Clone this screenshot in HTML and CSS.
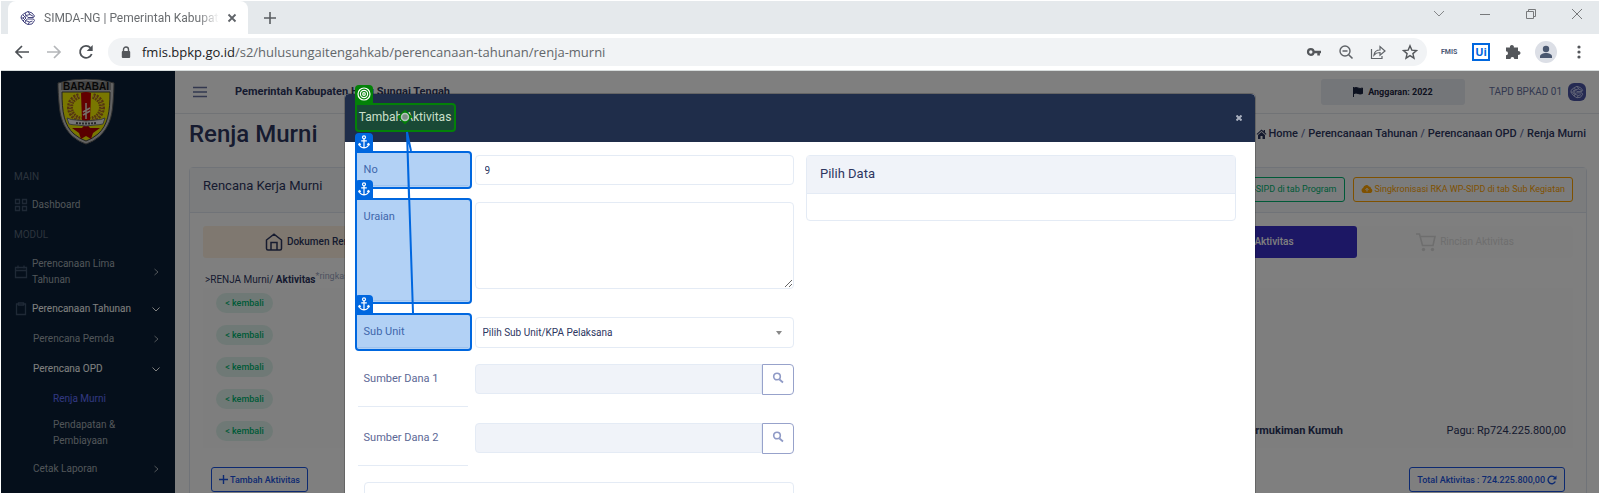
FILE: index.html
```html
<!DOCTYPE html>
<html lang="id">
<head>
<meta charset="utf-8">
<title>SIMDA-NG | Pemerintah Kabupaten</title>
<link rel="stylesheet" href="styles.css">
</head>
<body>
<svg class="defs" aria-hidden="true">
  <symbol id="anchor" viewBox="0 0 18 18"><g fill="none" stroke="#fff" stroke-width="1.2"><circle cx="9" cy="4.3" r="1.5"/><path d="M9 6v9M6.2 7.8h5.6M4.2 10.8c.3 2.6 2.2 3.9 4.8 4.1 2.600-.2 4.500-1.500 4.800-4.100M3.500 12.300l.8-1.700 1.600 1M14.500 12.300l-.8-1.700-1.600 1"/></g></symbol>
  <symbol id="right" viewBox="0 0 10 10"><path d="M3.500 2l3.500 3-3.500 3" fill="none" stroke="currentColor"/></symbol>
  <symbol id="down" viewBox="0 0 10 10"><path d="M1.500 3.500L5 7l3.500-3.500" fill="none" stroke="currentColor"/></symbol>
  <symbol id="search" viewBox="0 0 12 12"><path d="M7.500 7.500L11 10.500" stroke="currentColor" stroke-width="1.800"/><circle cx="5" cy="4.500" r="3.300" fill="none" stroke="currentColor" stroke-width="1.600"/></symbol>
  <symbol id="knot" viewBox="0 0 16 16"><g fill="none" stroke="currentColor" stroke-width="1"><path d="M5 3l3-1.500 4 1.500 2.500 3-1 1.500H8l-2-2 4-1 3.500 2M5 3L1.500 5.500 1 8l2 3 2 2M5 3l1 2.500L3 8l2.500 2.500L5 13l3 1.500 4-.5 2.500-3.500-1-1.500H7.500l-2 1.500 4 1.500 3-1M3 8H1M8 1.500l2 3M8 14.500l1.500-2.500M3 5l3 3-3 3"/></g></symbol>
</svg>

<header class="tabstrip">
  <div class="tab">
    <svg class="favicon" viewBox="0 0 16 16"><use href="#knot"/></svg>
    <span class="tab-title">SIMDA-NG | Pemerintah Kabupat</span>
    <button class="plain" aria-label="Tutup tab"><svg width="10" height="10" viewBox="0 0 10 10"><path d="M1.500 1.500l7 7M8.500 1.500l-7 7" stroke="#5f6368" stroke-width="1.800"/></svg></button>
  </div>
  <button class="plain new-tab" aria-label="Tab baru"><svg width="14" height="14" viewBox="0 0 14 14"><path d="M7 1v12M1 7h12" stroke="#5a5e62" stroke-width="1.600"/></svg></button>
  <div class="window-controls">
    <button class="plain" aria-label="Cari tab"><svg width="12" height="12" viewBox="0 0 12 12"><path d="M1 3l5 5 5-5" fill="none" stroke="#858789"/></svg></button>
    <button class="plain" aria-label="Kecilkan"><svg width="12" height="12" viewBox="0 0 12 12"><path d="M1 6.500h10" stroke="#77797b"/></svg></button>
    <button class="plain" aria-label="Pulihkan"><svg width="12" height="12" viewBox="0 0 12 12"><path d="M1.500 3.500h7v7h-7zM3.500 3.500v-2h7v7h-2" fill="none" stroke="#77797b"/></svg></button>
    <button class="plain" aria-label="Tutup"><svg width="12" height="12" viewBox="0 0 12 12"><path d="M1 1l10 10M11 1L1 11" stroke="#77797b"/></svg></button>
  </div>
</header>

<div class="toolbar">
  <nav class="history">
    <button class="plain" aria-label="Kembali"><svg width="16" height="16" viewBox="0 0 16 16"><path d="M15 8H2M8 2L2 8l6 6" fill="none" stroke="#4d5156" stroke-width="1.700"/></svg></button>
    <button class="plain" aria-label="Maju"><svg width="16" height="16" viewBox="0 0 16 16"><path d="M1 8h13M8 2l6 6-6 6" fill="none" stroke="#b4b6b9" stroke-width="1.700"/></svg></button>
    <button class="plain" aria-label="Muat ulang"><svg width="16" height="16" viewBox="0 0 16 16"><path d="M13.700 10A6 6 0 1 1 12.500 3.800" fill="none" stroke="#4d5156" stroke-width="1.800"/><path d="M14.700 1v6h-6z" fill="#4d5156"/></svg></button>
  </nav>
  <div class="omnibox">
    <svg width="10" height="13" viewBox="0 0 10 13"><path d="M2.500 6V3.500a2.500 2.500 0 0 1 5 0V6" fill="none" stroke="#54575b" stroke-width="1.400"/><rect x=".8" y="5" width="8.400" height="7" rx="1" fill="#54575b"/></svg>
    <span class="url"><b>fmis.bpkp.go.id</b>/s2/hulusungaitengahkab/perencanaan-tahunan/renja-murni</span>
    <div class="omni-icons">
      <svg viewBox="0 0 16 16"><circle cx="4.800" cy="8" r="2.800" fill="none" stroke="#54575b" stroke-width="2.200"/><path d="M8 8h7M12.600 8v3.600" stroke="#54575b" stroke-width="2.600"/></svg>
      <svg viewBox="0 0 16 16"><circle cx="7" cy="7" r="5" fill="none" stroke="#5f6368" stroke-width="1.400"/><path d="M4.500 7h5M10.700 10.700L14.500 14.500" stroke="#5f6368" stroke-width="1.600"/></svg>
      <svg viewBox="0 0 16 16"><path d="M1.500 5v9.500h10.500v-2.500M4 11c.5-3.500 2.500-5 6-5V2.500L15 7l-5 4.200V8.500C7 8.500 5.500 9.200 4 11z" fill="none" stroke="#5f6368" stroke-width="1.200"/></svg>
      <svg viewBox="0 0 16 16"><path d="M8 1.800l1.800 4.300 4.700.4-3.600 3.100 1.100 4.600L8 11.700l-4 2.500 1.100-4.600L1.500 6.500l4.700-.4z" fill="none" stroke="#54575b" stroke-width="1.400"/></svg>
    </div>
  </div>
  <div class="extensions">
    <span class="ext-fmis">FMIS</span>
    <span class="ext-ui">Ui</span>
    <svg width="16" height="16" viewBox="0 0 16 16"><path d="M1 3.500h4a2 2 0 1 1 3.800 0H13v3.700a1.900 1.900 0 1 1 0 3.600V15H9.300a1.900 1.900 0 0 0-3.800 0H1v-3.700a2 2 0 0 0 0-4z" fill="#54575b"/></svg>
    <svg width="22" height="22" viewBox="0 0 22 22"><circle cx="11" cy="11" r="11" fill="#dcdfe6"/><circle cx="11" cy="8" r="3.200" fill="#4a5870"/><path d="M5 17v-1.500c0-2.300 3-3.500 6-3.500s6 1.200 6 3.500V17z" fill="#4a5870"/></svg>
    <svg width="16" height="16" viewBox="0 0 16 16" fill="#54575b"><circle cx="8" cy="3" r="1.600"/><circle cx="8" cy="8" r="1.600"/><circle cx="8" cy="13" r="1.600"/></svg>
  </div>
</div>

<div class="page">
  <aside class="sidebar">
    <svg class="crest" viewBox="0 0 58 66">
      <path d="M1 4Q15 0 29 0t28 4q0 8-1 20c-1 14-4 24-13 33q-7 6-14 8-7-2-14-8C6 48 3 38 2 24 1 12 1 8 1 4z" fill="#c4c4c4" stroke="#5c5c5c"/>
      <path d="M5 13h48c0 20-2 33-12 42q-6 5-12 7-6-2-12-7C7 46 5 33 5 13z" fill="#f2ee00" stroke="#444"/>
      <path d="M4 4Q29-1 54 4v7H4z" fill="#8c8c8c"/>
      <text x="29" y="11" text-anchor="middle" class="crest-name">BARABAI</text>
      <path d="M22 17q-9 3-9 12 1 9 11 12M36 17q9 3 9 12-1 9-11 12" fill="none" stroke="#a86a1c" stroke-width="6" stroke-dasharray="2 1"/>
      <path d="M22 17q-9 3-9 12 1 9 11 12M36 17q9 3 9 12-1 9-11 12" fill="none" stroke="#e8b54a" stroke-width="2" stroke-dasharray="1 2"/>
      <path d="M24 14q5-2 10 0l-1 28h-8z" fill="#c40000"/>
      <path d="M29 24v16M26 33l7-4M26 36l7-4" stroke="#eadfd0" stroke-width="1.500"/>
      <path d="M29 44l4 5 10 0-7 5-2 6-5-3-5 3-2-6-7-5 10 0z" fill="#b30000"/>
      <path d="M10 39q4 2 9 2 10 2 20 0 5 0 9-2l-2 6q-4 1-8 1-9 2-18 0-4 0-8-1z" fill="#eee" stroke="#777"/>
      <path d="M19 44q10 1 20 0" stroke="#555" stroke-width="2" stroke-dasharray="2 1" fill="none"/>
    </svg>
    <nav class="menu">
      <p class="menu-head">MAIN</p>
      <a class="item" href="#"><svg class="icon" viewBox="0 0 14 14"><path d="M1.500 1.500h4v4h-4zM8.500 1.500h4v4h-4zM1.500 8.500h4v4h-4zM8.500 8.500h4v4h-4z"/></svg><span>Dashboard</span></a>
      <p class="menu-head second">MODUL</p>
      <a class="item tall" href="#"><svg class="icon" viewBox="0 0 14 14"><path d="M1.500 2.500h11v10h-11zM1.500 5.500h11M4 .5v3M10 .5v3"/></svg><span>Perencanaan Lima<br>Tahunan</span><svg class="chev"><use href="#right"/></svg></a>
      <a class="item open" href="#"><svg class="icon" viewBox="0 0 14 14"><path d="M4.500 2h-2v10.500h9V2h-2M4.500 1h5v2h-5z"/></svg><span>Perencanaan Tahunan</span><svg class="chev"><use href="#down"/></svg></a>
      <a class="item sub" href="#"><span>Perencana Pemda</span><svg class="chev"><use href="#right"/></svg></a>
      <a class="item sub open" href="#"><span>Perencana OPD</span><svg class="chev"><use href="#down"/></svg></a>
      <a class="item leaf current" href="#"><span>Renja Murni</span></a>
      <a class="item leaf two" href="#"><span>Pendapatan &amp;<br>Pembiayaan</span></a>
      <a class="item sub last" href="#"><span>Cetak Laporan</span><svg class="chev"><use href="#right"/></svg></a>
    </nav>
  </aside>

  <main class="main">
    <div class="topbar">
      <button class="plain" aria-label="Menu"><svg width="14" height="12" viewBox="0 0 14 12"><path d="M0 1.500h14M0 6h14M0 10.500h14" stroke="#66719f" stroke-width="1.500"/></svg></button>
      <strong class="org">Pemerintah Kabupaten Hulu Sungai Tengah</strong>
      <button class="budget"><svg width="10" height="10" viewBox="0 0 10 10"><path d="M.5 0v10M1 1q2-1 4 0t4.500 0v5.500q-2.500 1-4.500 0t-4 0z" fill="#1b2440" stroke="#1b2440"/></svg>Anggaran: 2022</button>
      <span class="user">TAPD BPKAD 01</span>
      <span class="avatar"><svg viewBox="0 0 16 16"><use href="#knot"/></svg></span>
    </div>
    <div class="heading">
      <h1>Renja Murni</h1>
      <nav class="crumbs">
        <a href="#"><svg width="11" height="10" viewBox="0 0 11 10"><path d="M5.500.5L.5 5l.7.700L5.500 2l4.300 3.700.7-.700-1.500-1.400V1H7.700v1.300zM5.500 3L2 6v4h2.500V7h2v3H9V6z" fill="currentColor"/></svg>Home</a><i>/</i><a href="#">Perencanaan Tahunan</a><i>/</i><a href="#">Perencanaan OPD</a><i>/</i><span>Renja Murni</span>
      </nav>
    </div>
    <section class="card">
      <div class="card-head">
        <h2>Rencana Kerja Murni</h2>
        <button class="btn green">Singkronisasi RKA WP-SIPD di tab Program</button>
        <button class="btn orange"><svg width="12" height="10" viewBox="0 0 12 10"><path d="M3 9a2.700 2.700 0 0 1-.8-5.200A3.200 3.200 0 0 1 8 2.500a2 2 0 0 1 2 2A2.400 2.400 0 0 1 9.500 9z" fill="currentColor"/><path d="M6 7.500V4.500M4.500 5.800L6 4.300l1.500 1.500" stroke="#f1f4f9" fill="none"/></svg>Singkronisasi RKA WP-SIPD di tab Sub Kegiatan</button>
      </div>
      <div class="card-body">
        <div class="steps">
          <button class="step docs"><svg width="18" height="18" viewBox="0 0 18 18"><path d="M1.500 7L9 1.200 16.500 7v8.500q0 1.500-1.500 1.500H3q-1.500 0-1.500-1.500zM6 17V9.500h6V17" fill="none" stroke="currentColor" stroke-width="1.500"/></svg>Dokumen Renja</button>
          <button class="step active"><svg width="20" height="20" viewBox="0 0 20 20"><path d="M3 10h4l2-6 3 12 2-6h3" fill="none" stroke="currentColor" stroke-width="1.500"/></svg>Aktivitas</button>
          <button class="step muted"><svg width="20" height="20" viewBox="0 0 20 20"><path d="M0 2h3.500l3 11.500h10.500l2-9H4.500" fill="none" stroke="currentColor" stroke-width="1.600"/><circle cx="7.500" cy="17.500" r="1.700" fill="currentColor"/><circle cx="16.500" cy="17.500" r="1.700" fill="currentColor"/></svg>Rincian Aktivitas</button>
        </div>
        <p class="trail">&gt;RENJA Murni/ <b>Aktivitas</b><sup>*ringkasan</sup></p>
        <div class="rows">
          <div class="row"><button class="back">&lt; kembali</button></div>
          <div class="row"><button class="back">&lt; kembali</button></div>
          <div class="row"><button class="back">&lt; kembali</button></div>
          <div class="row"><button class="back">&lt; kembali</button></div>
          <div class="row"><button class="back">&lt; kembali</button><strong class="scope">Permukiman Kumuh</strong><span class="pagu">Pagu: Rp724.225.800,00</span></div>
        </div>
        <div class="actions">
          <button class="btn blue"><svg width="9" height="9" viewBox="0 0 9 9"><path d="M4.500 0v9M0 4.500h9" stroke="currentColor" stroke-width="1.400"/></svg>Tambah Aktivitas</button>
          <button class="btn blue">Total Aktivitas : 724.225.800,00<svg width="10" height="10" viewBox="0 0 10 10"><path d="M8.300 6.500A3.800 3.800 0 1 1 7.800 2.500" fill="none" stroke="currentColor" stroke-width="1.400"/><path d="M9.500.5v4h-4z" fill="currentColor"/></svg></button>
        </div>
      </div>
    </section>
  </main>

  <div class="backdrop">
    <div class="modal" role="dialog" aria-labelledby="dlg">
      <div class="modal-head"><h3 id="dlg" class="target"><i class="tag"><svg width="18" height="18" viewBox="0 0 18 18" fill="none" stroke="#fff" stroke-width="1.200"><circle cx="9" cy="9" r="6"/><circle cx="9" cy="9" r="3.600"/><circle cx="9" cy="9" r="1.300"/></svg></i>Tambah Aktivitas</h3><button class="plain close" aria-label="Tutup dialog"><svg width="6" height="6" viewBox="0 0 6 6"><path d="M.5.5l5 5M5.500.5l-5 5" stroke="#a9b0bf" stroke-width="2"/></svg></button></div>
      <div class="modal-body">
        <form class="form">
          <label class="anchor" for="no"><i class="tag"><svg width="18" height="18"><use href="#anchor"/></svg></i>No</label>
          <input id="no" class="field" type="text" value="9">
          <label class="anchor area" for="uraian"><i class="tag"><svg width="18" height="18"><use href="#anchor"/></svg></i>Uraian</label>
          <textarea id="uraian" class="field"></textarea>
          <label class="anchor" for="unit"><i class="tag"><svg width="18" height="18"><use href="#anchor"/></svg></i>Sub Unit</label>
          <div class="select-wrap"><select id="unit" class="field"><option>Pilih Sub Unit/KPA Pelaksana</option></select><svg width="6" height="4" viewBox="0 0 6 4"><path d="M0 0h6L3 4z" fill="#888"/></svg></div>
          <label class="source" for="dana1">Sumber Dana 1</label>
          <div class="lookup"><input id="dana1" class="field" type="text" readonly><button type="button" aria-label="Cari sumber dana 1"><svg width="12" height="12"><use href="#search"/></svg></button></div>
          <label class="source" for="dana2">Sumber Dana 2</label>
          <div class="lookup"><input id="dana2" class="field" type="text" readonly><button type="button" aria-label="Cari sumber dana 2"><svg width="12" height="12"><use href="#search"/></svg></button></div>
          <div class="panel"></div>
        </form>
        <section class="picker"><h4>Pilih Data</h4><div class="picker-body"></div></section>
      </div>
      <svg class="links" width="100" height="240" viewBox="0 0 100 240">
        <path d="M62 38l4 19M62 38l2 66M62 38l6 181" fill="none" stroke="#0067df" stroke-width="2"/>
        <path d="M60 17l6 6-6 6-6-6z" fill="#038108" stroke="#038108" stroke-width="2"/>
        <circle cx="60" cy="23" r="3.500" fill="#7d8f86" stroke="#b5c7bb" stroke-width="1.500"/>
      </svg>
    </div>
  </div>
</div>
</body>
</html>
```
FILE: styles.css
```css
* { box-sizing: border-box; }
body {
  margin: 0;
  height: 100vh;
  padding: 1px 1px 0;
  display: flex;
  flex-direction: column;
  overflow: hidden;
  background: #fff;
  color: #2d365f;
  font: 10px/16px Roboto, "Liberation Sans", sans-serif;
}
h1, h2, h3, h4, p { margin: 0; font-weight: 400; }
a { color: inherit; text-decoration: none; }
i { font-style: normal; }
button, input, select, textarea { font: inherit; color: inherit; }
button { display: flex; align-items: center; justify-content: center; padding: 0; }
svg { flex: none; display: block; }
.defs { position: absolute; width: 0; height: 0; }
.plain { border: 0; background: none; }

/* Browser frame */
.tabstrip { flex: none; height: 33px; display: flex; background: #e5e9ec; padding-left: 7px; }
.tab { width: 240px; display: flex; align-items: center; gap: 8px; padding: 0 11px 0 12px; background: #fff; border-radius: 8px 8px 0 0; color: #6a6d70; }
.favicon { width: 16px; height: 16px; color: #45457f; }
.tab-title { flex: 1; white-space: nowrap; font-size: 12px; mask-image: linear-gradient(90deg, #000 88%, transparent); }
.new-tab { width: 44px; }
.window-controls { margin-left: auto; display: flex; align-items: flex-start; gap: 34px; padding: 7px 16px 0 0; }
.toolbar { flex: none; height: 37px; display: flex; align-items: center; border-bottom: 1px solid #d7dcdc; padding: 0 12px 0 13px; }
.history { display: flex; gap: 16px; width: 94px; }
.omnibox { flex: 1; height: 28px; display: flex; align-items: center; gap: 11px; padding: 0 9px 0 13px; border-radius: 14px; background: #f1f3f5; }
.url { flex: 1; font: 13px/20px "Open Sans", sans-serif; color: #62666a; }
.url b { font-weight: 400; color: #202124; }
.omni-icons { display: flex; gap: 16px; }
.omni-icons svg { width: 16px; height: 16px; }
.extensions { display: flex; align-items: center; gap: 14px; padding-left: 14px; }
.ext-fmis { width: 16px; font: 700 7px/16px Roboto, sans-serif; color: #4c5874; text-align: center; }
.ext-ui { width: 16px; height: 16px; margin: 0 2px; background: #fff; border: 1px solid #0067df; outline: 1px solid #0067df; color: #0067df; font: 700 11px/13px "Open Sans", sans-serif; text-align: center; }

/* Application */
.page { flex: 1; min-height: 0; position: relative; display: flex; overflow: hidden; }
.sidebar { flex: none; width: 174px; background: #0a1f36; color: #a3abb3; overflow: hidden; }
.crest { width: 58px; height: 66px; margin: 8px 0 0 56px; }
.crest-name { font: 700 10px "Liberation Sans", sans-serif; fill: #111; }
.menu { display: flex; flex-direction: column; padding: 24px 14px 0 13px; }
.menu-head { color: #59677a; }
.item { display: flex; align-items: center; gap: 4px; padding: 12px 0 4px; height: 32px; }
.item span { flex: 1; }
.icon { width: 14px; height: 14px; fill: none; stroke: #3f526d; stroke-width: 1.3; }
.chev { width: 10px; height: 10px; }
.second { margin-top: 10px; }
.menu .tall { height: 45px; padding: 13px 0 0; }
.tall + .item { height: 33px; padding: 13px 0 4px; }
.open { color: #fff; }
.sub { height: 30px; padding: 10px 0 4px 19px; }
.leaf { height: 30px; padding: 10px 0 4px 39px; }
.current { color: #6571ff; }
.menu .two { height: 40px; padding: 6px 0 2px 39px; }
.last { height: 30px; padding-top: 10px; }
.main { flex: 1; min-width: 0; }
.topbar { display: flex; align-items: center; height: 43px; border-bottom: 1px solid #e2e6ec; padding: 0 13px 0 18px; }
.org { margin-left: 28px; font-size: 11px; }
.budget { gap: 5px; margin-left: auto; width: 144px; height: 26px; border: 0; border-radius: 3px; background: #e9ecf2; color: #1b2440; font-size: 9px; font-weight: 700; }
.user { margin: 0 6px 0 24px; color: #66719f; }
.avatar { width: 18px; height: 18px; padding: 2px; border-radius: 6px; background: #4b55a5; color: #ced4f5; }
.heading { display: flex; align-items: center; justify-content: space-between; height: 53px; padding: 0 13px 13px 14px; }
h1 { font-size: 24px; line-height: 28px; font-weight: 500; }
.crumbs { display: flex; font-size: 11px; font-weight: 500; }
.crumbs a { display: flex; align-items: center; gap: 1px; }
.crumbs i { margin: 0 3px; color: #66719f; }
.card { margin: 0 12px 0 14px; border: 1px solid #e0e6f0; border-radius: 4px; height: 400px; }
.card-head { display: flex; align-items: center; gap: 8px; height: 45px; padding: 0 13px 2px; background: #f6f8fb; border-bottom: 1px solid #e0e6f0; }
h2 { flex: 1; font-size: 13px; padding-bottom: 6px; }
.btn { height: 25px; gap: 2px; padding: 0 7px; border: 1px solid; border-radius: 3px; background: none; white-space: nowrap; font-size: 9px; font-weight: 500; }
.green { color: #00b571; }
.orange { color: #ffa300; }
.blue { color: #1b55e3; }
.card-head .btn { font-weight: 400; }
.card-body { padding: 13px; }
.steps { display: grid; grid-template-columns: 230fr 734fr 190fr 216fr; height: 32px; }
.step { gap: 4px; border: 0; border-radius: 3px; background: #fff; font-weight: 500; }
.docs { padding-right: 14px; background: #fff1e0; }
.active { grid-column: 3; background: #392fc8; color: #fff; }
.muted { color: #dcdcdc; background: #fdfdfd; font-weight: 400; }
.trail { height: 30px; padding: 14px 0 0 2px; white-space: nowrap; }
.trail sup { color: #9ba4bf; font-size: 9px; line-height: 1px; }
.rows { background: #fcfcfc; }
.row { display: flex; align-items: center; height: 32px; padding: 0 7px 2px 13px; }
.back { width: 57px; height: 20px; border: 0; border-radius: 10px; background: #dff3ec; color: #00b571; font-size: 9px; font-weight: 500; }
.scope { margin-left: auto; font-size: 11px; }
.pagu { width: 223px; text-align: right; font-size: 11px; }
.actions { display: flex; justify-content: space-between; padding: 19px 8px 0; }

/* Dialog */
.backdrop { position: absolute; inset: 0; display: flex; justify-content: center; padding: 23px 0 0; background: rgba(0, 0, 0, .5); }
.modal { position: relative; width: 57%; background: #fff; border-radius: 4px 4px 0 0; box-shadow: 0 0 0 1px rgba(0, 0, 0, .2); }
.modal-head { display: flex; align-items: center; justify-content: space-between; height: 48px; padding: 0 13px 0 10px; background: #1f2d4a; border-radius: 4px 4px 0 0; }
.target { position: relative; width: 101px; height: 29px; margin-bottom: 1px; border: 2px solid #038108; border-radius: 0 4px 4px 4px; background: #194936; color: #cce0cb; font-size: 12px; line-height: 25px; text-align: center; white-space: nowrap; }
.tag { position: absolute; left: -2px; top: -20px; width: 18px; height: 20px; border-radius: 4px 4px 0 0; background: #038108; }
.modal-body { display: grid; grid-template-columns: 436fr 430fr; gap: 12px; align-items: start; padding: 13px 19px 0 13px; }
.form { display: grid; grid-template-columns: 110px 1fr; gap: 16px 7px; align-items: start; color: #5c6795; }
.form label { position: relative; height: 31px; padding: 7px 6px; border-bottom: 1px solid #e4ebf5; font-size: 11px; }
.form .area { height: 99px; }
.form .source { height: 43px; }
.anchor::before { content: ""; position: absolute; inset: -4px -4px -4px -3px; border: 2px solid #0067df; border-radius: 0 4px 4px 4px; background: rgba(0, 103, 223, .3); }
.anchor .tag { left: -3px; top: -22px; z-index: 1; background: #0067df; }
.field { display: block; width: 100%; min-width: 0; height: 30px; margin: 0; padding: 0 9px; border: 1px solid #e4ebf5; border-radius: 4px; background: #fff; color: #2d365f; outline: 0; }
textarea.field { height: 87px; resize: vertical; }
.select-wrap { display: flex; align-items: center; position: relative; }
.select-wrap svg { position: absolute; right: 12px; }
select.field { appearance: none; height: 31px; padding: 0 7px; }
.lookup { display: flex; }
.lookup .field { flex: 1; border-radius: 4px 0 0 4px; background: #f0f3f9; }
.lookup button { width: 32px; height: 31px; padding-bottom: 3px; border: 1px solid #97a2cb; border-radius: 0 4px 4px 0; background: #fff; color: #8f9ac6; }
.panel { grid-column: 1 / 3; height: 60px; margin-left: 6px; border: 1px solid #e4ebf5; border-radius: 4px; }
.picker { border: 1px solid #e4ebf5; border-radius: 4px; }
h4 { height: 38px; padding: 10px 13px; border-bottom: 1px solid #e4ebf5; background: #f0f3f9; font-size: 13px; color: #2d365f; }
.picker-body { height: 26px; }
.links { position: absolute; left: 0; top: 0; z-index: 2; pointer-events: none; }
```
